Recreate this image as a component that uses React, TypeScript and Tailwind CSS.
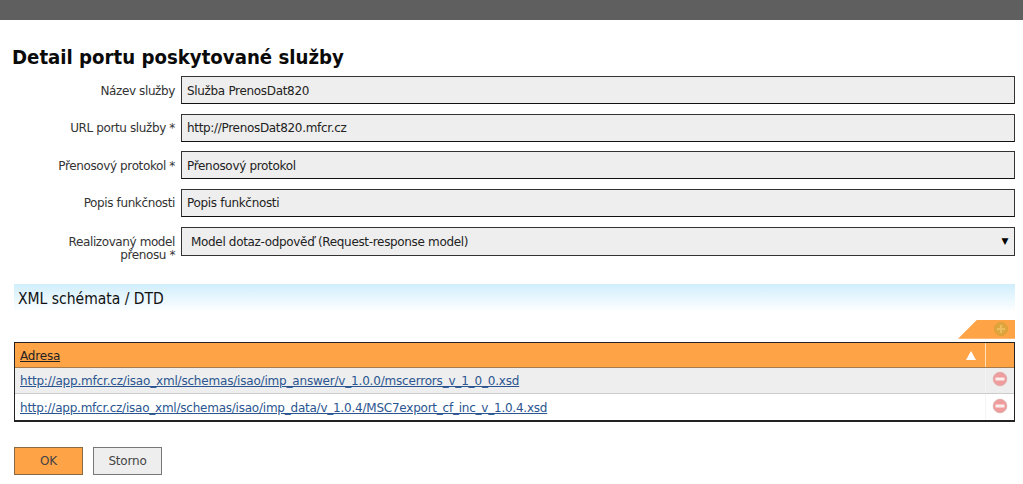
const font = { fontFamily: '"DejaVu Sans", sans-serif' };
const condensed = { fontFamily: '"DejaVu Sans Condensed", "DejaVu Sans", sans-serif', fontStretch: "condensed" };

function Field({ label, value, mandatory }: { label: string; value: string; mandatory?: boolean }) {
  return (
    <div className="flex items-center h-[28px] mb-[9.67px]">
      <div className="w-[181px] pr-[6px] pt-[1px] text-right text-[12px] tracking-[-0.38px] text-[#333]">{label}{mandatory ? " *" : ""}</div>
      <div className="flex-1 h-[28px] bg-[#eeeeee] border border-[#333] border-b-[#111] pl-[5px] pt-[1px] flex items-center text-[12px] tracking-[-0.32px] text-[#222]">{value}</div>
    </div>
  );
}

function Minus() {
  return (
    <svg width="16" height="16" viewBox="0 0 16 16">
      <circle cx="8" cy="8" r="6.8" fill="#ee9c9c" stroke="#e0b0b0" />
      <rect x="3.5" y="6.5" width="9" height="3" fill="#fbeeee" />
    </svg>
  );
}

function Row({ href, alt }: { href: string; alt?: boolean }) {
  return (
    <div className={`flex h-[26px] ${alt ? "bg-white" : "bg-[#eeeeee] border-b border-[#cccccc]"}`}>
      <div className={`flex-1 pl-[5px] flex items-center text-[12px] ${alt ? "pt-[3px] tracking-[-0.23px]" : "pt-[2px] tracking-[-0.19px]"}`}>
        <a className="underline text-[#2a5590]">{href}</a>
      </div>
      <div className="w-[29px] flex items-center justify-center border-l border-[#f4f4f4] pb-[2px]"><Minus /></div>
    </div>
  );
}

export default function App() {
  return (
    <div className="w-[1023px] h-[484px] overflow-hidden bg-white" style={font}>
      <div className="h-[20px] bg-[#5f5f5f]" />
      <div className="pl-[12px] pt-[23px] h-[56px]">
        <h1 className="text-[20.2px] leading-[28px] font-bold text-[#0a0a0a]" style={condensed}>Detail portu poskytované služby</h1>
      </div>
      <div className="pr-[8px]">
        <Field label="Název služby" value="Služba PrenosDat820" />
        <Field label="URL portu služby" value="http://PrenosDat820.mfcr.cz" mandatory />
        <Field label="Přenosový protokol" value="Přenosový protokol" mandatory />
        <Field label="Popis funkčnosti" value="Popis funkčnosti" />
        <div className="flex items-center h-[29px]">
          <div className="w-[181px] pr-[6px] pt-[15px] text-right text-[12px] tracking-[-0.4px] leading-[13px] text-[#333]">Realizovaný model<br />přenosu *</div>
          <div className="flex-1 h-[29px] bg-[#eeeeee] border border-[#333] pl-[9px] pr-[6px] pt-[1px] flex items-center justify-between text-[12px] tracking-[-0.33px] text-[#222]">
            <span>Model dotaz-odpověď (Request-response model)</span>
            <span className="text-[9px] text-black">▼</span>
          </div>
        </div>
      </div>
      <div className="ml-[14px] mr-[8px] mt-[28px] h-[28px] bg-gradient-to-b from-[#d0eefc] to-white pl-[4px] pt-[4px] flex items-center">
        <h2 className="text-[15.5px] text-[#111]" style={condensed}>XML schémata / DTD</h2>
      </div>
      <div className="ml-[14px] mr-[8px] mt-[8px] h-[22px] flex justify-end">
        <div className="relative w-[57px] h-[19px] bg-[#ffa347] [clip-path:polygon(19px_0,100%_0,100%_100%,0_100%)] flex items-center justify-end pr-[7px]">
          <svg width="14" height="14" viewBox="0 0 14 14">
            <circle cx="7" cy="7" r="6.5" fill="#dfa63f" stroke="#d89e36" />
            <path d="M6 3h2v3h3v2H8v3H6V8H3V6h3z" fill="#ecbd5e" />
          </svg>
        </div>
      </div>
      <div className="ml-[14px] mr-[8px] border border-[#222] border-b-2">
        <div className="flex h-[25px] bg-[#ffa347] border-b border-[#a87b4a]">
          <div className="flex-1 pl-[5px] pt-[2px] flex items-center justify-between pr-[9px] text-[12px] tracking-[-0.19px] text-[#222]">
            <span className="underline">Adresa</span>
            <span className="w-0 h-0 border-l-[5px] border-r-[5px] border-b-[9px] border-l-transparent border-r-transparent border-b-white" />
          </div>
          <div className="w-[29px] border-l border-[#ffe0b8]" />
        </div>
        <Row href="http://app.mfcr.cz/isao_xml/schemas/isao/imp_answer/v_1.0.0/mscerrors_v_1_0_0.xsd" />
        <Row href="http://app.mfcr.cz/isao_xml/schemas/isao/imp_data/v_1.0.4/MSC7export_cf_inc_v_1.0.4.xsd" alt />
      </div>
      <div className="ml-[14px] mt-[25px] flex gap-[10px]">
        <button className="w-[69px] h-[28px] bg-[#ffa347] border border-[#8a6a44] text-[12px] tracking-[-0.19px] text-[#444]">OK</button>
        <button className="w-[69px] h-[28px] bg-[#eeeeee] border border-[#777] text-[12px] tracking-[-0.19px] text-[#444]">Storno</button>
      </div>
    </div>
  );
}
